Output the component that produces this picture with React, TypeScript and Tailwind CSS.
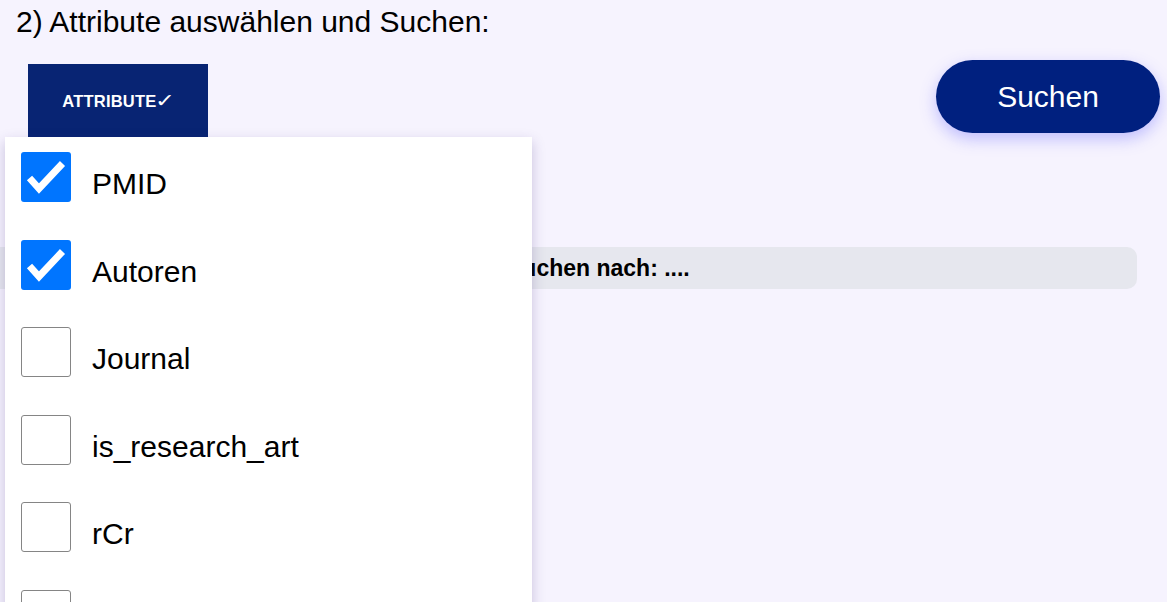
import { useState } from "react";

const ATTRIBUTES = [
  { key: "pmid", label: "PMID", checked: true },
  { key: "autoren", label: "Autoren", checked: true },
  { key: "journal", label: "Journal", checked: false },
  { key: "is_research_art", label: "is_research_art", checked: false },
  { key: "rcr", label: "rCr", checked: false },
  { key: "jahr", label: "Jahr", checked: false },
];

function Box({ checked }: { checked: boolean }) {
  if (checked) {
    return (
      <div className="w-[50px] h-[50px] shrink-0 rounded-[3px] bg-[#0075ff]">
        <svg viewBox="0 0 50 50" className="w-full h-full">
          <polyline points="8.5,26 18,36.5 41.5,11.5" fill="none" stroke="#fff" strokeWidth="7" strokeLinejoin="miter" />
        </svg>
      </div>
    );
  }
  return <div className="w-[50px] h-[50px] shrink-0 rounded-[3px] border border-[#858585] bg-white" />;
}

export default function App() {
  const [items, setItems] = useState(ATTRIBUTES);

  const toggle = (key: string) =>
    setItems((prev) => prev.map((it) => (it.key === key ? { ...it, checked: !it.checked } : it)));

  return (
    <div className="relative w-[1167px] h-[602px] overflow-hidden bg-[#f6f3fe] font-['Liberation_Sans',Arial,sans-serif] text-black">
      {/* Überschrift */}
      <h2 className="pl-[16px] pt-[5px] text-[30px] leading-[34px] font-normal">2) Attribute auswählen und Suchen:</h2>

      {/* Buttons */}
      <div className="flex items-start justify-between pl-[28px] pr-[7px] mt-[21px]">
        <button className="mt-[4px] w-[180px] h-[74px] bg-[#082473] text-white text-[16.5px] font-bold uppercase tracking-[0.2px] flex items-center justify-center">
          <span>Attribute</span>
          <span className="inline-block text-[19px] font-normal scale-x-125 ml-[1px]">✓</span>
        </button>
        <button className="w-[224px] h-[73px] rounded-full bg-[#00207f] text-white text-[30px] shadow-[0_6px_16px_rgba(90,90,255,0.35)]">
          Suchen
        </button>
      </div>

      {/* Ergebnisleiste */}
      <div className="mt-[109px] mr-[30px] h-[42px] rounded-r-[10px] bg-[#e6e7ee] flex items-center pl-[507px]">
        <span className="font-bold text-[23px]">Suchen nach: ....</span>
      </div>

      {/* Dropdown */}
      <div className="absolute left-[5px] top-[137px] w-[527px] h-[520px] bg-white shadow-[0_5px_12px_rgba(60,40,120,0.25)] pt-[15px] pl-[16px]">
        <div className="flex flex-col gap-[37.5px]">
          {items.map((it) => (
            <label key={it.key} className="flex items-center gap-[21px] cursor-pointer" onClick={() => toggle(it.key)}>
              <Box checked={it.checked} />
              <span className="text-[30px] pt-[14px] leading-[34px]">{it.label}</span>
            </label>
          ))}
        </div>
      </div>
    </div>
  );
}
